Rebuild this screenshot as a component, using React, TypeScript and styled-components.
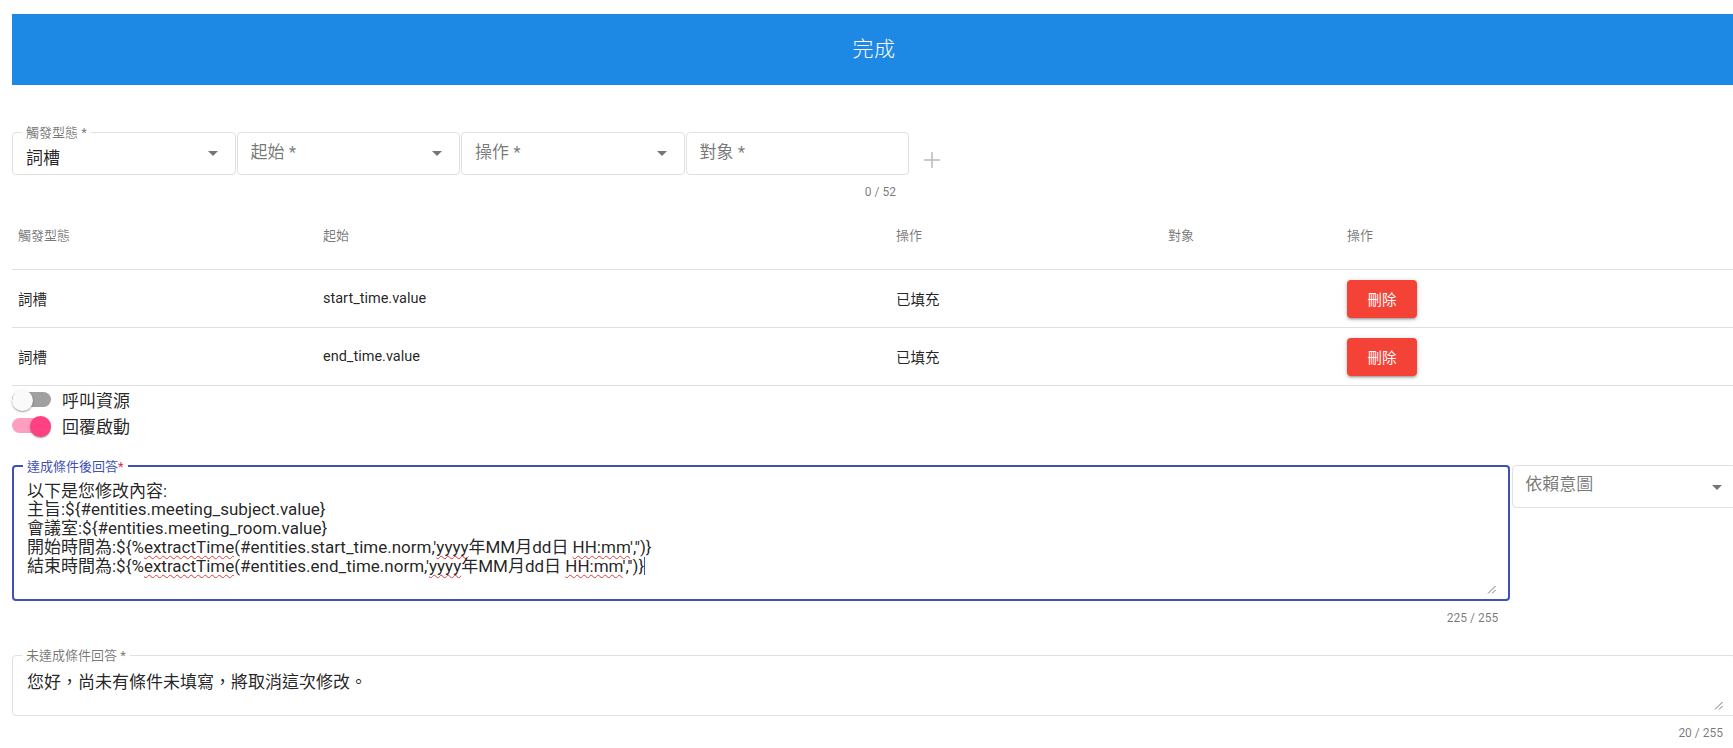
import React from "react";
import styled, { createGlobalStyle } from "styled-components";

const GlobalStyle = createGlobalStyle`
  html, body {
    margin: 0;
    padding: 0;
    background: #ffffff;
    overflow: hidden;
  }
  body {
    font-family: Roboto, "Noto Sans CJK TC", "Noto Sans", sans-serif;
    color: rgba(0, 0, 0, 0.87);
  }
  * { box-sizing: border-box; }
`;

const Page = styled.div`
  width: 1724px;
  padding: 14px 0 0 12px;
  box-sizing: content-box;
`;

const DoneBar = styled.div`
  height: 71px;
  background: #1e88e5;
  color: #ffffff;
  font-size: 21px;
  font-weight: 300;
  display: flex;
  align-items: center;
  justify-content: center;
  padding-bottom: 5px;
  letter-spacing: 0.5px;
`;

const FieldRow = styled.div`
  margin-top: 47px;
  display: flex;
  align-items: flex-start;
  gap: 1px;
`;

const Field = styled.div`
  position: relative;
  width: 223.5px;
  height: 43px;
  border: 1px solid #e0e0e0;
  border-radius: 4px;
  display: flex;
  justify-content: space-between;
  align-items: flex-start;
  padding: 0 17px 0 13px;
`;

const FloatLabel = styled.span<{ $focused?: boolean }>`
  position: absolute;
  top: -8px;
  left: 9px;
  padding: 0 4px;
  background: #ffffff;
  font-size: 13px;
  line-height: 15px;
  color: ${(p) => (p.$focused ? "#3f51b5" : "rgba(0,0,0,0.54)")};
  white-space: nowrap;
`;

const Star = styled.span<{ $focused?: boolean }>`
  color: ${(p) => (p.$focused ? "#e91e63" : "inherit")};
`;

const ValueText = styled.span`
  padding-top: 16px;
  font-size: 17px;
  line-height: 18px;
  color: rgba(0, 0, 0, 0.87);
`;

const Placeholder = styled.span`
  padding-top: 10px;
  font-size: 17px;
  line-height: 18px;
  color: rgba(0, 0, 0, 0.54);
`;

const Arrow = styled.span<{ $top?: number }>`
  margin-top: ${(p) => p.$top ?? 18}px;
  width: 0;
  height: 0;
  border-left: 5px solid transparent;
  border-right: 5px solid transparent;
  border-top: 5px solid rgba(0, 0, 0, 0.54);
`;

const PlusIcon = styled.svg`
  margin: 20px 0 0 14px;
  flex: none;
`;

const Counter = styled.div<{ $width: number }>`
  width: ${(p) => p.$width}px;
  margin-top: 10px;
  text-align: right;
  font-size: 12px;
  line-height: 15px;
  color: rgba(0, 0, 0, 0.54);
`;

const TableHead = styled.div`
  display: grid;
  grid-template-columns: 305px 573px 272px 179px 1fr;
  height: 70px;
  padding: 28px 0 0 6px;
  border-bottom: 1px solid #e0e0e0;
  font-size: 13px;
  line-height: 16px;
  color: rgba(0, 0, 0, 0.54);
`;

const TableRow = styled.div`
  display: grid;
  grid-template-columns: 305px 573px 272px 179px 1fr;
  align-items: center;
  height: 58px;
  padding-left: 6px;
  border-bottom: 1px solid #e0e0e0;
  font-size: 14.5px;
  color: rgba(0, 0, 0, 0.87);
`;

const DeleteButton = styled.button`
  width: 70px;
  height: 38px;
  border: none;
  border-radius: 4px;
  background: #f44336;
  color: #ffffff;
  font-family: inherit;
  font-size: 14.5px;
  padding: 0;
  box-shadow: 0px 1px 5px 0px rgba(0, 0, 0, 0.2),
    0px 2px 2px 0px rgba(0, 0, 0, 0.14),
    0px 3px 1px -2px rgba(0, 0, 0, 0.12);
`;

const SwitchRow = styled.div`
  display: flex;
  align-items: center;
  height: 26px;
  gap: 11px;
  font-size: 17px;
`;

const SwitchTrack = styled.span<{ $on: boolean }>`
  width: 39px;
  height: 15px;
  border-radius: 8px;
  background: ${(p) => (p.$on ? "#ff9fc0" : "#a0a0a0")};
  display: flex;
  align-items: center;
  justify-content: ${(p) => (p.$on ? "flex-end" : "flex-start")};
`;

const SwitchThumb = styled.span<{ $on: boolean }>`
  width: 21px;
  height: 21px;
  border-radius: 50%;
  background: ${(p) => (p.$on ? "#ff4081" : "#fafafa")};
  box-shadow: 0px 1px 3px 0px rgba(0, 0, 0, 0.2),
    0px 1px 1px 0px rgba(0, 0, 0, 0.14),
    0px 2px 1px -1px rgba(0, 0, 0, 0.12);
  margin-top: 3px;
`;

const AnswerRow = styled.div`
  margin-top: 27px;
  display: flex;
  align-items: flex-start;
  gap: 2px;
`;

const AnswerBlock = styled.div<{ $width: number }>`
  width: ${(p) => p.$width}px;
  display: flex;
  flex-direction: column;
  align-items: flex-end;
`;

const TextBox = styled.div<{ $focused?: boolean; $height: number }>`
  position: relative;
  align-self: stretch;
  height: ${(p) => p.$height}px;
  border: ${(p) => (p.$focused ? "2px solid #3f51b5" : "1px solid #e0e0e0")};
  border-radius: 4px;
  padding: ${(p) => (p.$focused ? "14.5px 13px 0 13px" : "17px 14px 0 14px")};
  font-size: 17px;
  line-height: 18.75px;
  color: rgba(0, 0, 0, 0.87);
  white-space: pre;
`;

const Spell = styled.span`
  text-decoration: underline wavy #e53935;
  text-decoration-thickness: 1px;
  text-underline-offset: 2px;
  text-decoration-skip-ink: none;
`;

const Caret = styled.span`
  display: inline-block;
  width: 1px;
  height: 18px;
  background: #3f51b5;
  vertical-align: -3px;
`;

const Grip = styled.svg`
  position: absolute;
  right: 12px;
  bottom: 5px;
`;

const Helper = styled.div<{ $right: number }>`
  margin: 10px ${(p) => p.$right}px 0 0;
  font-size: 12px;
  line-height: 15px;
  color: rgba(0, 0, 0, 0.54);
`;

const IntentSelect = styled.div`
  width: 224px;
  height: 43px;
  border: 1px solid #e0e0e0;
  border-radius: 4px;
  display: flex;
  justify-content: space-between;
  align-items: flex-start;
  padding: 0 13px 0 12px;
`;

const IntentText = styled.span`
  padding-top: 9px;
  font-size: 17px;
  line-height: 18px;
  color: rgba(0, 0, 0, 0.54);
`;

const SecondBlock = styled.div`
  margin-top: 29px;
  display: flex;
  flex-direction: column;
  align-items: flex-end;
`;

const ResizeGrip = () => (
  <Grip width="9" height="9" viewBox="0 0 9 9">
    <line x1="1" y1="8.5" x2="8.5" y2="1" stroke="#777" strokeWidth="1" />
    <line x1="5" y1="8.5" x2="8.5" y2="5" stroke="#777" strokeWidth="1" />
  </Grip>
);

const rows = [
  { type: "詞槽", start: "start_time.value", op: "已填充" },
  { type: "詞槽", start: "end_time.value", op: "已填充" },
];

export default function App() {
  return (
    <>
      <GlobalStyle />
      <Page>
        <DoneBar>完成</DoneBar>

        <FieldRow>
          <Field>
            <FloatLabel>觸發型態 *</FloatLabel>
            <ValueText>詞槽</ValueText>
            <Arrow />
          </Field>
          <Field>
            <Placeholder>起始 *</Placeholder>
            <Arrow />
          </Field>
          <Field>
            <Placeholder>操作 *</Placeholder>
            <Arrow />
          </Field>
          <Field>
            <Placeholder>對象 *</Placeholder>
          </Field>
          <PlusIcon width="16" height="16" viewBox="0 0 16 16">
            <line x1="8" y1="0" x2="8" y2="16" stroke="#bdbdbd" strokeWidth="1.6" />
            <line x1="0" y1="8" x2="16" y2="8" stroke="#bdbdbd" strokeWidth="1.6" />
          </PlusIcon>
        </FieldRow>
        <Counter $width={884}>0 / 52</Counter>

        <TableHead>
          <span>觸發型態</span>
          <span>起始</span>
          <span>操作</span>
          <span>對象</span>
          <span>操作</span>
        </TableHead>
        {rows.map((r) => (
          <TableRow key={r.start}>
            <span>{r.type}</span>
            <span>{r.start}</span>
            <span>{r.op}</span>
            <span></span>
            <span>
              <DeleteButton>刪除</DeleteButton>
            </span>
          </TableRow>
        ))}

        <SwitchRow>
          <SwitchTrack $on={false}>
            <SwitchThumb $on={false} />
          </SwitchTrack>
          呼叫資源
        </SwitchRow>
        <SwitchRow>
          <SwitchTrack $on={true}>
            <SwitchThumb $on={true} />
          </SwitchTrack>
          回覆啟動
        </SwitchRow>

        <AnswerRow>
          <AnswerBlock $width={1500}>
            <TextBox $focused $height={136}>
              <FloatLabel $focused>
                達成條件後回答<Star $focused>*</Star>
              </FloatLabel>
              {"以下是您修改內容:\n"}
              {"主旨:${#entities.meeting_subject.value}\n"}
              {"會議室:${#entities.meeting_room.value}\n"}
              {"開始時間為:${%"}
              <Spell>extractTime</Spell>
              {"(#entities.start_time.norm,'"}
              <Spell>yyyy</Spell>
              {"年MM月dd日 "}
              <Spell>HH:mm</Spell>
              {"','')}\n"}
              {"結束時間為:${%"}
              <Spell>extractTime</Spell>
              {"(#entities.end_time.norm,'"}
              <Spell>yyyy</Spell>
              {"年MM月dd日 "}
              <Spell>HH:mm</Spell>
              {"','')}"}
              <Caret />
              <ResizeGrip />
            </TextBox>
            <Helper $right={12}>225 / 255</Helper>
          </AnswerBlock>
          <IntentSelect>
            <IntentText>依賴意圖</IntentText>
            <Arrow $top={19} />
          </IntentSelect>
        </AnswerRow>

        <SecondBlock>
          <TextBox $height={61}>
            <FloatLabel>未達成條件回答 *</FloatLabel>
            您好，尚未有條件未填寫，將取消這次修改。
            <ResizeGrip />
          </TextBox>
          <Helper $right={13}>20 / 255</Helper>
        </SecondBlock>
      </Page>
    </>
  );
}
